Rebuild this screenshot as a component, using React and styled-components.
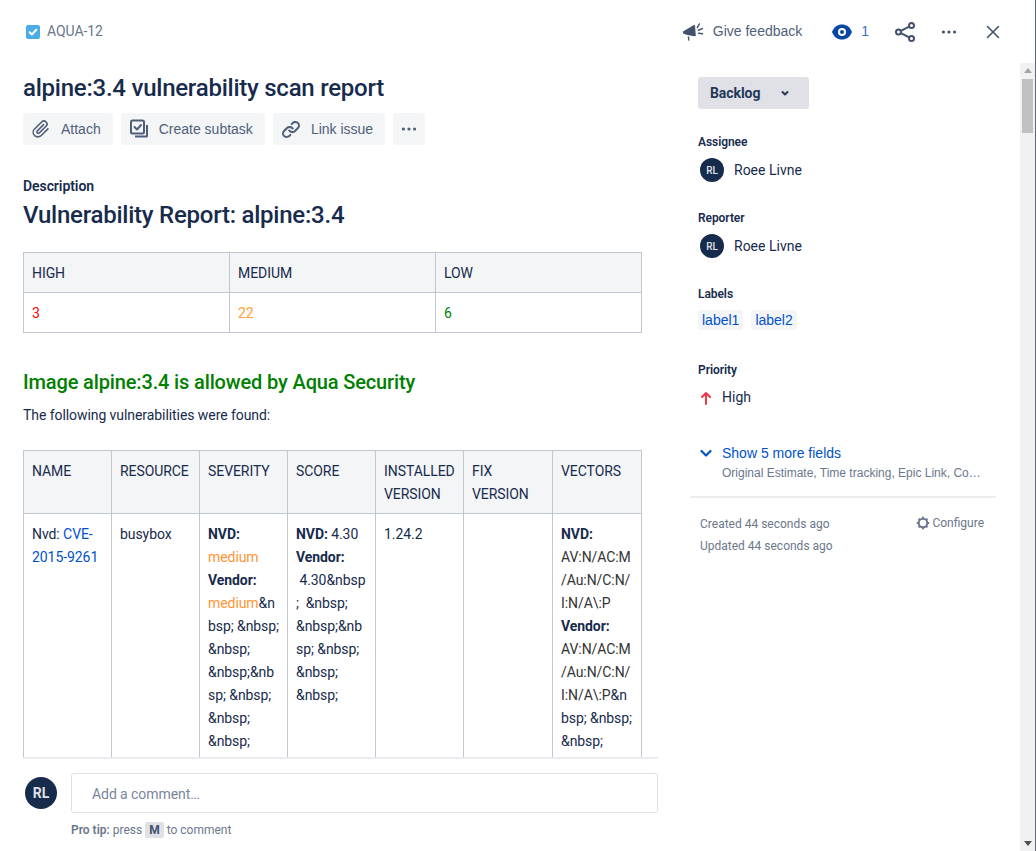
import React from "react";
import styled, { createGlobalStyle } from "styled-components";
import { X } from "lucide-react";

const GlobalStyle = createGlobalStyle`
    html, body {
        margin: 0;
        padding: 0;
        background: #fff;
    }
    body {
        font: 14px/23px Roboto, sans-serif;
        letter-spacing: -0.005em;
        color: #172b4d;
    }
`

const severityText = "&nbsp; &nbsp; &nbsp; &nbsp;&nbsp; &nbsp; &nbsp; &nbsp; &nbsp;";

function Dots({ color }) {
    return (
        <svg width="24" height="24" viewBox="0 0 24 24" fill={color}>
            <circle cx="5" cy="12" r="2" />
            <circle cx="12" cy="12" r="2" />
            <circle cx="19" cy="12" r="2" />
        </svg>
    );
}

function Avatar({ size }) {
    return <AvatarCircle size={size}>RL</AvatarCircle>;
}

function Person({ label }) {
    return (
        <Field>
            <FieldLabel>{label}</FieldLabel>
            <PersonRow>
                <Avatar size={24} />
                <span>Roee Livne</span>
            </PersonRow>
        </Field>
    );
}

function App() {
    return (
        <Page>
            <GlobalStyle />
            <TopBar>
                <IssueKey>
                    <svg width="16" height="16" viewBox="0 0 16 16">
                        <rect x="1" y="1" width="14" height="14" rx="2" fill="#4bade8" />
                        <path d="M4.6 8.2l2.3 2.3 4.4-4.8" fill="none" stroke="#fff" strokeWidth="2" strokeLinecap="round" strokeLinejoin="round" />
                    </svg>
                    <span>AQUA-12</span>
                </IssueKey>
                <TopActions>
                    <Feedback>
                        <svg width="22" height="22" viewBox="0 0 22 22" fill="#42526e">
                            <path d="M1 12.600v-2l10.500-6.400 1.500-.200.800 11-1.400.3-7-1.200-4.400-1.500z" />
                            <path d="M5.600 15.400l1.600.3.300 3.800-1.200.2z" />
                            <path d="M15.400 6.400l1.900-3.400M16.400 9.200l4-1.600M16.600 12.200l3.800.6" stroke="#42526e" strokeWidth="1.500" fill="none" strokeLinecap="round" />
                        </svg>
                        <span>Give feedback</span>
                    </Feedback>
                    <Watch>
                        <svg width="20" height="16" viewBox="0 0 20 16">
                            <path d="M0 8C2 2.800 5.600.5 10 .5s8 2.300 10 7.500c-2 5.200-5.600 7.500-10 7.500S2 13.200 0 8z" fill="#0747a6" />
                            <circle cx="10" cy="8" r="4" fill="#fff" />
                            <circle cx="10" cy="8" r="2" fill="#0747a6" />
                        </svg>
                        <span>1</span>
                    </Watch>
                    <ShareIcon width="20" height="20" viewBox="0 0 20 20" fill="none" stroke="#42526e" strokeWidth="2">
                        <circle cx="3.500" cy="10" r="2.500" />
                        <circle cx="16.500" cy="3.500" r="2.500" />
                        <circle cx="16.500" cy="16.500" r="2.500" />
                        <path d="M5.800 8.800l8.400-4.200M5.800 11.200l8.400 4.200" />
                    </ShareIcon>
                    <MoreIcon>
                        <Dots color="#42526e" />
                    </MoreIcon>
                    <CloseIcon>
                        <X size={22} color="#42526e" strokeWidth={1.7} />
                    </CloseIcon>
                </TopActions>
            </TopBar>
            <Body>
                <Main>
                    <Scroller>
                        <Title>alpine:3.4 vulnerability scan report</Title>
                        <Actions>
                            <ActionButton>
                                <svg width="24" height="24" viewBox="0 0 24 24" fill="#505f79">
                                    <path d="M11.643 17.965c-1.53 1.495-4.016 1.496-5.542.004a3.773 3.773 0 0 1 .002-5.412l7.147-6.985a2.316 2.316 0 0 1 3.233-.003c.893.873.895 2.282.004 3.153l-6.703 6.55a.653.653 0 0 1-.914-.008.62.62 0 0 1-.002-.887l6.262-6.12a.8.8 0 0 0-1.118-1.144l-6.26 6.12a2.218 2.218 0 0 0 .002 3.17 2.252 2.252 0 0 0 3.15.008l6.703-6.55a3.798 3.798 0 0 0-.004-5.436 3.916 3.916 0 0 0-5.471.003l-7.148 6.985a5.37 5.37 0 0 0-.002 7.702c2.151 2.102 5.65 2.1 7.78-.004l6.762-6.607a.8.8 0 1 0-1.12-1.144l-6.762 6.607z" />
                                </svg>
                                Attach
                            </ActionButton>
                            <ActionButton>
                                <svg width="24" height="24" viewBox="0 0 24 24" fill="none" stroke="#505f79" strokeWidth="2">
                                    <rect x="4" y="3.500" width="13" height="13" rx="1.500" />
                                    <path d="M7.500 10l2.500 2.500 4-4.500" strokeLinecap="round" strokeLinejoin="round" />
                                    <path d="M20 8v11a.5.5 0 0 1-.5.5H8" />
                                </svg>
                                Create subtask
                            </ActionButton>
                            <ActionButton>
                                <svg width="24" height="24" viewBox="0 0 24 24" fill="#505f79">
                                    <path d="M12.856 5.457l-.937.92a1.002 1.002 0 0 0 0 1.437 1.047 1.047 0 0 0 1.463 0l.984-.966c.967-.95 2.542-1.135 3.602-.288a2.54 2.54 0 0 1 .203 3.81l-2.903 2.852a2.646 2.646 0 0 1-3.696 0l-1.11-1.09L9 13.57l1.108 1.089c1.822 1.788 4.802 1.788 6.622 0l2.905-2.852a4.558 4.558 0 0 0-.357-6.82c-1.893-1.517-4.695-1.226-6.422.47" />
                                    <path d="M11.144 19.543l.937-.92a1.002 1.002 0 0 0 0-1.437 1.047 1.047 0 0 0-1.462 0l-.985.966c-.967.95-2.542 1.135-3.602.288a2.54 2.54 0 0 1-.203-3.81l2.903-2.852a2.646 2.646 0 0 1 3.696 0l1.11 1.09L15 11.43l-1.108-1.089c-1.822-1.788-4.802-1.788-6.622 0l-2.905 2.852a4.558 4.558 0 0 0 .357 6.82c1.893 1.517 4.695 1.226 6.422-.47" />
                                </svg>
                                Link issue
                            </ActionButton>
                            <SquareButton>
                                <Dots color="#505f79" />
                            </SquareButton>
                        </Actions>
                        <DescriptionLabel>Description</DescriptionLabel>
                        <ReportHeading>Vulnerability Report: alpine:3.4</ReportHeading>
                        <SummaryTable>
                            <thead>
                                <tr>
                                    <Th>HIGH</Th>
                                    <Th>MEDIUM</Th>
                                    <Th>LOW</Th>
                                </tr>
                            </thead>
                            <tbody>
                                <tr>
                                    <Td><Colored color="#ff0000">3</Colored></Td>
                                    <Td><Colored color="#ffa033">22</Colored></Td>
                                    <Td><Colored color="#008000">6</Colored></Td>
                                </tr>
                            </tbody>
                        </SummaryTable>
                        <AllowedHeading>Image alpine:3.4 is allowed by Aqua Security</AllowedHeading>
                        <FoundText>The following vulnerabilities were found:</FoundText>
                        <VulnTable>
                            <colgroup>
                                <col width="88" />
                                <col width="88" />
                                <col width="88" />
                                <col width="88" />
                                <col width="88" />
                                <col width="89" />
                                <col width="89" />
                            </colgroup>
                            <thead>
                                <tr>
                                    <Th>NAME</Th>
                                    <Th>RESOURCE</Th>
                                    <Th>SEVERITY</Th>
                                    <Th>SCORE</Th>
                                    <Th>INSTALLED VERSION</Th>
                                    <Th>FIX VERSION</Th>
                                    <Th>VECTORS</Th>
                                </tr>
                            </thead>
                            <tbody>
                                <tr>
                                    <Td>Nvd: <IssueLink>CVE-2015-9261</IssueLink></Td>
                                    <Td>busybox</Td>
                                    <Td>
                                        <strong>NVD:</strong> <Colored color="#ff9433">medium</Colored><br />
                                        <strong>Vendor:</strong> <Colored color="#ff9433">medium</Colored>{severityText}
                                    </Td>
                                    <Td>
                                        <strong>NVD:</strong> 4.30<br />
                                        <strong>Vendor:</strong><br />
                                        {"\u00a04.30&nbsp;\u00a0 &nbsp; &nbsp;&nbsp; &nbsp; &nbsp; &nbsp;"}
                                    </Td>
                                    <Td>1.24.2</Td>
                                    <Td></Td>
                                    <Td>
                                        <strong>NVD:</strong><br />
                                        <Colored color="#333333">AV:N/AC:M/Au:N/C:N/I:N/A\:P</Colored><br />
                                        <strong>Vendor:</strong><br />
                                        <Colored color="#333333">AV:N/AC:M/Au:N/C:N/I:N/A\:P</Colored>{"&nbsp; &nbsp; &nbsp;"}
                                    </Td>
                                </tr>
                            </tbody>
                        </VulnTable>
                    </Scroller>
                    <CommentArea>
                        <CommentRow>
                            <Avatar size={32} />
                            <CommentInput>Add a comment…</CommentInput>
                        </CommentRow>
                        <ProTip>
                            <strong>Pro tip:</strong> press <Key>M</Key> to comment
                        </ProTip>
                    </CommentArea>
                </Main>
                <Side>
                    <StatusButton>
                        Backlog
                        <svg width="16" height="16" viewBox="0 0 16 16" fill="none" stroke="#253858" strokeWidth="2" strokeLinecap="round" strokeLinejoin="round">
                            <path d="M5.500 7l2.500 2.500L10.500 7" />
                        </svg>
                    </StatusButton>
                    <Person label="Assignee" />
                    <Person label="Reporter" />
                    <Field>
                        <FieldLabel>Labels</FieldLabel>
                        <Tags>
                            <Tag>label1</Tag>
                            <Tag>label2</Tag>
                        </Tags>
                    </Field>
                    <Field>
                        <FieldLabel>Priority</FieldLabel>
                        <PriorityRow>
                            <svg width="16" height="16" viewBox="0 0 16 16" fill="none" stroke="#f0384b" strokeWidth="2" strokeLinecap="round" strokeLinejoin="round">
                                <path d="M8 14V3M4 7l4-4 4 4" />
                            </svg>
                            <span>High</span>
                        </PriorityRow>
                    </Field>
                    <MoreFields>
                        <ChevronSlot>
                            <svg width="16" height="16" viewBox="0 0 16 16" fill="none" stroke="#0052cc" strokeWidth="2.200" strokeLinecap="round" strokeLinejoin="round">
                                <path d="M3.500 6l4.500 4.500L12.500 6" />
                            </svg>
                        </ChevronSlot>
                        <div>
                            <MoreTitle>Show 5 more fields</MoreTitle>
                            <MoreList>Original Estimate, Time tracking, Epic Link, Components</MoreList>
                        </div>
                    </MoreFields>
                    <SideFooter>
                        <div>
                            <Stamp>Created 44 seconds ago</Stamp>
                            <Stamp>Updated 44 seconds ago</Stamp>
                        </div>
                        <Configure>
                            <svg width="14" height="14" viewBox="0 0 14 14" fill="none" stroke="#6b778c" strokeWidth="2">
                                <circle cx="7" cy="7" r="4.300" />
                                <path d="M7 .8v1.800M7 11.400v1.800M.8 7h1.800M11.400 7h1.800M2.600 2.600l1.300 1.300M10.100 10.100l1.300 1.300M2.600 11.400l1.300-1.300M10.100 3.900l1.300-1.300" />
                            </svg>
                            Configure
                        </Configure>
                    </SideFooter>
                </Side>
                <ScrollTrack>
                    <ScrollArrowUp />
                    <ScrollThumb />
                    <ScrollArrowDown />
                </ScrollTrack>
            </Body>
        </Page>
    );
}

const Page = styled.div`
    width: 1036px;
    height: 851px;
    box-sizing: border-box;
    border-right: 1px solid #5e6a7d;
    display: flex;
    flex-direction: column;
    overflow: hidden;
    background: #fff;
`

const TopBar = styled.header`
    height: 63px;
    flex: none;
    display: flex;
    align-items: center;
    justify-content: space-between;
    padding: 0 31px 0 25px;
    box-sizing: border-box;
`

const IssueKey = styled.div`
    display: flex;
    align-items: center;
    gap: 6px;
    color: #6b778c;
`

const TopActions = styled.div`
    display: flex;
    align-items: center;
`

const Feedback = styled.div`
    display: flex;
    align-items: center;
    gap: 9px;
    font-family: "Liberation Sans", sans-serif;
    letter-spacing: 0;
    color: #505f79;
`

const Watch = styled.div`
    display: flex;
    align-items: center;
    gap: 9px;
    margin-left: 30px;
    color: #3a6fb7;
    font-family: "Liberation Sans", sans-serif;
`

const ShareIcon = styled.svg`
    margin-left: 26px;
`

const MoreIcon = styled.div`
    display: flex;
    margin-left: 22px;
    transform: scale(0.8);
`

const CloseIcon = styled.div`
    display: flex;
    margin-left: 21px;
`

const Body = styled.div`
    flex: 1;
    min-height: 0;
    display: flex;
`

const Main = styled.div`
    width: 658px;
    flex: none;
    display: flex;
    flex-direction: column;
`

const Scroller = styled.div`
    flex: 1;
    min-height: 0;
    overflow: hidden;
    margin-left: 23px;
    padding-right: 16px;
    border-bottom: 2px solid #ebecf0;
`

const Title = styled.h1`
    margin: 11px 0 0;
    font-size: 24px;
    line-height: 28px;
    font-weight: 500;
    letter-spacing: -0.01em;
    color: #172b4d;
`

const Actions = styled.div`
    display: flex;
    gap: 8px;
    margin-top: 11px;
`

const ActionButton = styled.div`
    height: 32px;
    display: flex;
    align-items: center;
    gap: 8px;
    padding: 0 12px 0 6px;
    background: #f4f5f7;
    border-radius: 3px;
    color: #505f79;
    font-family: "Liberation Sans", sans-serif;
    letter-spacing: 0;
`

const SquareButton = styled.div`
    width: 32px;
    height: 32px;
    display: flex;
    align-items: center;
    justify-content: center;
    background: #f4f5f7;
    border-radius: 3px;

    svg {
        transform: scale(0.8);
    }
`

const DescriptionLabel = styled.div`
    margin-top: 30px;
    font-weight: 600;
    line-height: 23px;
`

const ReportHeading = styled.h1`
    margin: 3px 0 0;
    font-size: 24px;
    line-height: 28px;
    font-weight: 500;
    letter-spacing: -0.01em;
`

const SummaryTable = styled.table`
    width: 619px;
    margin-top: 23px;
    border-collapse: collapse;
    table-layout: fixed;
`

const VulnTable = styled(SummaryTable)`
    margin-top: 23px;
`

const Th = styled.th`
    border: 1px solid #c1c7d0;
    padding: 9px 8px 7px;
    background: #f4f5f7;
    font-weight: 400;
    text-align: left;
    vertical-align: top;
`

const Td = styled.td`
    border: 1px solid #c1c7d0;
    padding: 9px 8px 7px;
    vertical-align: top;
    overflow-wrap: break-word;
    word-break: break-word;

    strong {
        font-weight: 700;
    }
`

const Colored = styled.span`
    color: ${props => props.color};
`

const IssueLink = styled.span`
    color: #0052cc;
`

const AllowedHeading = styled.h2`
    margin: 35px 0 0;
    font-size: 20px;
    line-height: 28px;
    font-weight: 500;
    letter-spacing: -0.007em;
    color: #008000;
`

const FoundText = styled.p`
    margin: 8px 0 0;
`

const CommentArea = styled.div`
    height: 92px;
    flex: none;
    box-sizing: border-box;
    padding: 14px 0 0 25px;
`

const CommentRow = styled.div`
    display: flex;
    align-items: center;
    gap: 14px;
`

const AvatarCircle = styled.div`
    width: ${props => props.size}px;
    height: ${props => props.size}px;
    flex: none;
    border-radius: 50%;
    background: #172b4d;
    color: #dfe1e6;
    display: flex;
    align-items: center;
    justify-content: center;
    font-size: ${props => props.size > 24 ? 14 : 10}px;
    font-weight: ${props => props.size > 24 ? 700 : 500};
`

const CommentInput = styled.div`
    flex: 1;
    height: 40px;
    box-sizing: border-box;
    border: 1px solid #dfe1e6;
    border-radius: 3px;
    padding: 0 20px;
    line-height: 40px;
    color: #7a869a;
`

const ProTip = styled.div`
    margin: 6px 0 0 46px;
    font-size: 12px;
    letter-spacing: 0;
    color: #6b778c;

    strong {
        font-weight: 600;
    }
`

const Key = styled.span`
    display: inline-block;
    padding: 0 4px;
    background: #dfe1e6;
    border-radius: 2px;
    line-height: 16px;
    font-weight: 700;
    color: #42526e;
`

const Side = styled.aside`
    width: 306px;
    flex: none;
    margin-left: 32px;
    padding-top: 14px;
`

const StatusButton = styled.div`
    width: 111px;
    height: 32px;
    box-sizing: border-box;
    margin: 0 0 23px 8px;
    display: flex;
    align-items: center;
    justify-content: space-between;
    padding: 0 16px 0 12px;
    background: #dfe1e6;
    border-radius: 3px;
    font-weight: 700;
    color: #253858;
`

const Field = styled.div`
    margin-left: 8px;
    height: 76px;
`

const FieldLabel = styled.div`
    font-size: 12px;
    font-weight: 600;
    line-height: 20px;
`

const PersonRow = styled.div`
    display: flex;
    align-items: center;
    gap: 10px;
    height: 24px;
    margin-top: 6px;
    padding-left: 2px;
    letter-spacing: 0;
`

const Tags = styled.div`
    display: flex;
    gap: 8px;
    margin-top: 6px;
`

const Tag = styled.div`
    height: 20px;
    line-height: 20px;
    padding: 0 4px;
    background: #f4f5f7;
    border-radius: 3px;
    color: #0052cc;
    font-family: "Liberation Sans", sans-serif;
    letter-spacing: 0;
`

const PriorityRow = styled.div`
    display: flex;
    align-items: center;
    gap: 8px;
    margin-top: 6px;
    letter-spacing: 0;
`

const MoreFields = styled.div`
    display: flex;
    gap: 8px;
    margin-top: 7px;
    padding: 0 0 13px 8px;
    border-bottom: 2px solid #ebecf0;
`

const ChevronSlot = styled.div`
    display: flex;
    height: 20px;
    align-items: center;
`

const MoreTitle = styled.div`
    color: #0052cc;
    font-family: "Liberation Sans", sans-serif;
    letter-spacing: 0;
    line-height: 20px;
`

const MoreList = styled.div`
    width: 260px;
    font: 12px/20px "Liberation Sans", sans-serif;
    letter-spacing: 0;
    color: #6b778c;
    white-space: nowrap;
    overflow: hidden;
    text-overflow: ellipsis;
`

const SideFooter = styled.div`
    display: flex;
    justify-content: space-between;
    padding: 15px 12px 0 10px;
`

const Stamp = styled.div`
    font-size: 12px;
    line-height: 22px;
    letter-spacing: 0;
    color: #6b778c;
`

const Configure = styled.div`
    display: flex;
    align-items: center;
    gap: 2px;
    height: 20px;
    font-size: 12px;
    letter-spacing: 0;
    color: #6b778c;
`

const ScrollTrack = styled.div`
    width: 15px;
    margin-left: auto;
    background: #f1f1f1;
    display: flex;
    flex-direction: column;
    align-items: center;
`

const ScrollArrowUp = styled.div`
    margin-top: 5px;
    border: 4px solid transparent;
    border-top: 0;
    border-bottom: 5px solid #a3a3a3;
`

const ScrollArrowDown = styled.div`
    margin: auto 0 5px;
    border: 4px solid transparent;
    border-bottom: 0;
    border-top: 5px solid #505050;
`

const ScrollThumb = styled.div`
    width: 11px;
    height: 54px;
    margin-top: 6px;
    background: #c1c1c1;
`

export default App;
